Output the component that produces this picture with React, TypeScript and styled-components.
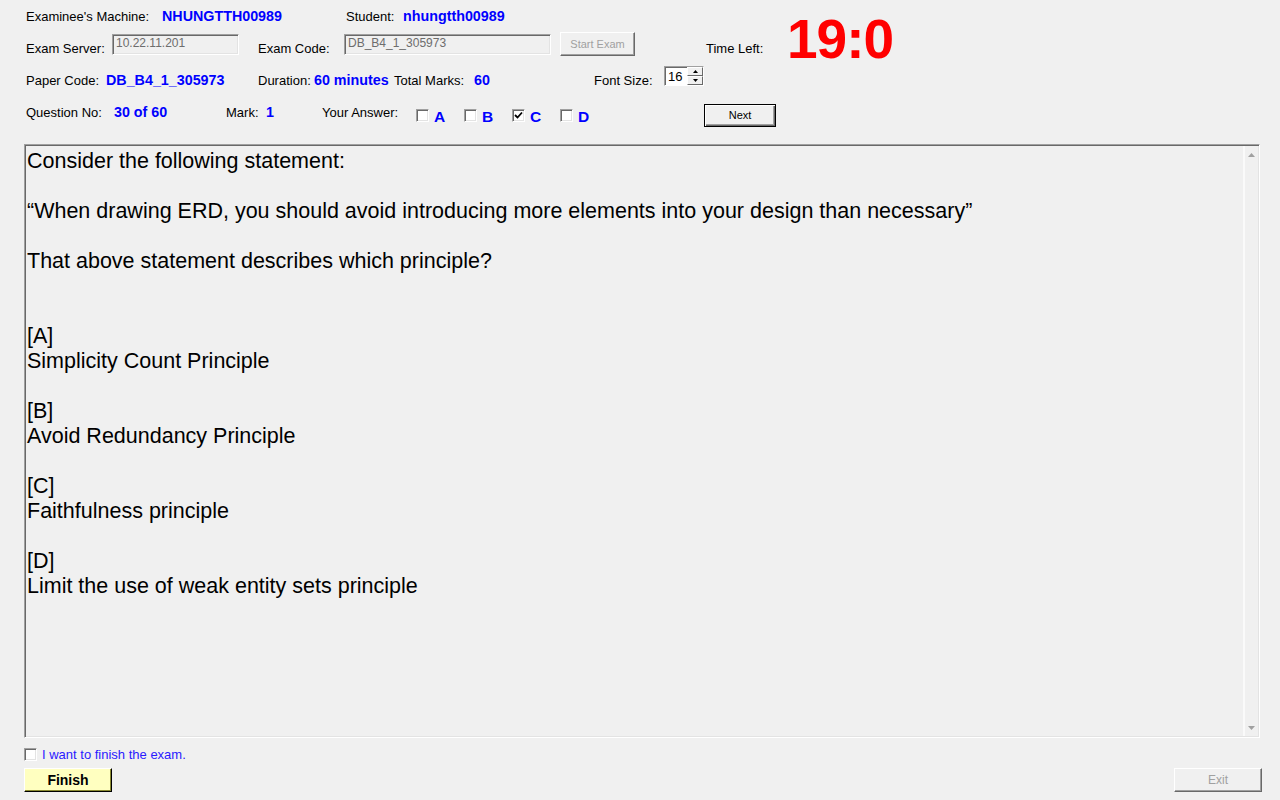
import styled, { createGlobalStyle } from "styled-components";

const GlobalStyle = createGlobalStyle`
  html, body {
    margin: 0;
    padding: 0;
    background: #f0f0f0;
  }
  body {
    font-family: "Liberation Sans", Arial, sans-serif;
    color: #000;
  }
`;

const question = `Consider the following statement:

“When drawing ERD, you should avoid introducing more elements into your design than necessary”

That above statement describes which principle?


[A]
Simplicity Count Principle

[B]
Avoid Redundancy Principle

[C]
Faithfulness principle

[D]
Limit the use of weak entity sets principle`;

const options = [
  { key: "A", checked: false },
  { key: "B", checked: false },
  { key: "C", checked: true },
  { key: "D", checked: false },
];

const UpArrow = () => (
  <svg width="7" height="4" viewBox="0 0 7 4">
    <path d="M3.5 0 L7 4 L0 4 Z" fill="#a0a0a0" />
  </svg>
);

const DownArrow = () => (
  <svg width="7" height="4" viewBox="0 0 7 4">
    <path d="M0 0 L7 0 L3.5 4 Z" fill="#a0a0a0" />
  </svg>
);

const CheckBox = ({ checked }: { checked?: boolean }) => (
  <Box>
    {checked && (
      <svg width="9" height="9" viewBox="0 0 9 9">
        <path d="M1 4 L3.5 6.5 L8 1.5" stroke="#000" strokeWidth="1.8" fill="none" />
      </svg>
    )}
  </Box>
);

const App = () => {
  return (
    <>
      <GlobalStyle />
      <Window>
        <Header>
          <TopSection>
            <LeftBlock>
              <Row $h={32}>
                <Label $w={136}>Examinee's Machine:</Label>
                <Value $w={184}>NHUNGTTH00989</Value>
                <Label $w={57}>Student:</Label>
                <Value>nhungtth00989</Value>
              </Row>
              <Row $h={24}>
                <Label $w={86} $dy={4}>Exam Server:</Label>
                <TextField $w={127}>10.22.11.201</TextField>
                <Spacer $w={19} />
                <Label $w={86} $dy={4}>Exam Code:</Label>
                <TextField $w={207}>DB_B4_1_305973</TextField>
                <Spacer $w={9} />
                <WinButton $w={75} $h={24} disabled>
                  Start Exam
                </WinButton>
              </Row>
            </LeftBlock>
            <TimeBlock>
              <TimeLabel>Time Left:</TimeLabel>
              <Timer>19:0</Timer>
            </TimeBlock>
          </TopSection>
          <Row $h={40}>
            <Label $w={80} $dy={4}>Paper Code:</Label>
            <Value $w={152} $dy={4}>DB_B4_1_305973</Value>
            <Label $w={56} $dy={4}>Duration:</Label>
            <Value $w={80} $dy={4}>60 minutes</Value>
            <Label $w={80} $dy={4}>Total Marks:</Label>
            <Value $w={120} $dy={4}>60</Value>
            <Label $w={70} $dy={4}>Font Size:</Label>
            <Spinner>
              <SpinValue>16</SpinValue>
              <SpinButtons>
                <SpinButton>
                  <svg width="5" height="3" viewBox="0 0 5 3">
                    <path d="M2.5 0 L5 3 L0 3 Z" fill="#000" />
                  </svg>
                </SpinButton>
                <SpinButton>
                  <svg width="5" height="3" viewBox="0 0 5 3">
                    <path d="M0 0 L5 0 L2.5 3 Z" fill="#000" />
                  </svg>
                </SpinButton>
              </SpinButtons>
            </Spinner>
          </Row>
          <Row $h={38}>
            <Label $w={88} $dy={-3}>Question No:</Label>
            <Value $w={112} $dy={-3}>30 of 60</Value>
            <Label $w={40} $dy={-3}>Mark:</Label>
            <Value $w={56} $dy={-3}>1</Value>
            <Label $w={94} $dy={-3}>Your Answer:</Label>
            {options.map((o) => (
              <AnswerOption key={o.key}>
                <CheckBox checked={o.checked} />
                <AnswerLetter>{o.key}</AnswerLetter>
              </AnswerOption>
            ))}
            <Spacer $w={96} />
            <WinButton $w={72} $h={23} $default>
              Next
            </WinButton>
          </Row>
        </Header>

        <QuestionPanel>
          <QuestionText>{question}</QuestionText>
          <ScrollBar>
            <UpArrow />
            <DownArrow />
          </ScrollBar>
        </QuestionPanel>

        <FinishCheck>
          <CheckBox />
          <FinishLabel>I want to finish the exam.</FinishLabel>
        </FinishCheck>

        <ButtonRow>
          <WinButton $w={88} $h={24} $finish>
            Finish
          </WinButton>
          <WinButton $w={88} $h={24} $size={12} disabled>
            Exit
          </WinButton>
        </ButtonRow>
      </Window>
    </>
  );
};

export default App;

const Window = styled.div`
  width: 1280px;
  height: 800px;
  box-sizing: border-box;
  padding-left: 24px;
  display: flex;
  flex-direction: column;
  overflow: hidden;
`;

const Header = styled.div`
  padding-left: 2px;
  display: flex;
  flex-direction: column;
`;

const TopSection = styled.div`
  display: flex;
  height: 56px;
`;

const LeftBlock = styled.div`
  width: 680px;
  display: flex;
  flex-direction: column;
`;

const Row = styled.div<{ $h: number }>`
  display: flex;
  align-items: center;
  height: ${(p) => p.$h}px;
`;

const Spacer = styled.div<{ $w: number }>`
  width: ${(p) => p.$w}px;
  flex-shrink: 0;
`;

const Label = styled.span<{ $w?: number; $dy?: number }>`
  ${(p) => (p.$w ? `width: ${p.$w}px;` : "")}
  flex-shrink: 0;
  font-size: 13px;
  line-height: 15px;
  white-space: nowrap;
  ${(p) =>
    p.$dy
      ? p.$dy > 0
        ? `padding-top: ${p.$dy * 2}px;`
        : `padding-bottom: ${-p.$dy * 2}px;`
      : ""}
`;

const Value = styled(Label)`
  font-size: 14.3px;
  font-weight: bold;
  color: #0000ff;
`;

const TextField = styled.div<{ $w: number }>`
  width: ${(p) => p.$w}px;
  height: 21px;
  box-sizing: border-box;
  flex-shrink: 0;
  border: 1px solid;
  border-color: #a0a0a0 #fff #fff #a0a0a0;
  box-shadow: inset 1px 1px #696969, inset -1px -1px #e3e3e3;
  background: #f0f0f0;
  color: #6d6d6d;
  font-size: 12px;
  line-height: 17px;
  padding-left: 3px;
`;

const WinButton = styled.button<{
  $w: number;
  $h: number;
  $default?: boolean;
  $finish?: boolean;
  $size?: number;
}>`
  width: ${(p) => p.$w}px;
  height: ${(p) => p.$h}px;
  flex-shrink: 0;
  box-sizing: border-box;
  padding: 0;
  margin: 0;
  font-family: "Liberation Sans", Arial, sans-serif;
  font-size: ${(p) => (p.$finish ? 14 : p.$size ?? 11)}px;
  font-weight: ${(p) => (p.$finish ? "bold" : "normal")};
  color: #000;
  background: ${(p) => (p.$finish ? "#ffffc0" : "#f0f0f0")};
  border: 1px solid;
  border-color: ${(p) =>
    p.$default ? "#000" : p.$finish ? "#fff #000 #000 #fff" : "#fff #696969 #696969 #fff"};
  box-shadow: ${(p) =>
    p.$default
      ? "inset 1px 1px #fff, inset -1px -1px #696969, inset -2px -2px #a0a0a0"
      : p.$finish
      ? "inset -1px -1px #8a8a30"
      : "inset -1px -1px #a0a0a0"};

  &:disabled {
    color: #a0a0a0;
  }
`;

const TimeBlock = styled.div`
  display: flex;
  align-items: flex-start;
`;

const TimeLabel = styled.span`
  width: 81px;
  font-size: 13px;
  line-height: 15px;
  padding-top: 41px;
  white-space: nowrap;
`;

const Timer = styled.span`
  font-size: 55px;
  line-height: 55px;
  margin-top: 12px;
  letter-spacing: -1px;
  font-weight: bold;
  color: #ff0000;
  white-space: nowrap;
`;

const Spinner = styled.div`
  width: 40px;
  height: 20px;
  box-sizing: border-box;
  display: flex;
  border: 1px solid;
  border-color: #a0a0a0 #fff #fff #a0a0a0;
  box-shadow: inset 1px 1px #696969;
  background: #fff;
`;

const SpinValue = styled.span`
  flex: 1;
  font-size: 13px;
  line-height: 17px;
  padding: 1px 0 0 3px;
`;

const SpinButtons = styled.div`
  width: 16px;
  display: flex;
  flex-direction: column;
`;

const SpinButton = styled.div`
  flex: 1;
  display: flex;
  align-items: center;
  justify-content: center;
  background: #f0f0f0;
  box-sizing: border-box;
  border: 1px solid;
  border-color: #fff #696969 #696969 #fff;
`;

const AnswerOption = styled.div`
  width: 48px;
  flex-shrink: 0;
  display: flex;
  align-items: center;
  gap: 5px;
`;

const Box = styled.div`
  width: 13px;
  height: 13px;
  box-sizing: border-box;
  flex-shrink: 0;
  display: flex;
  align-items: center;
  justify-content: center;
  background: #fff;
  border: 1px solid;
  border-color: #a0a0a0 #fff #fff #a0a0a0;
  box-shadow: inset 1px 1px #696969, inset -1px -1px #e3e3e3;
`;

const AnswerLetter = styled.span`
  font-size: 15.5px;
  font-weight: bold;
  color: #0000ff;
  line-height: 17px;
  padding-top: 3px;
`;

const QuestionPanel = styled.div`
  margin-top: 10px;
  width: 1236px;
  height: 594px;
  box-sizing: border-box;
  display: flex;
  border: 1px solid;
  border-color: #a0a0a0 #fff #fff #a0a0a0;
  box-shadow: inset 1px 1px #696969, inset -1px -1px #e3e3e3;
  background: #f0f0f0;
`;

const QuestionText = styled.div`
  flex: 1;
  padding: 4px 0 0 2px;
  font-size: 21.5px;
  line-height: 25px;
  white-space: pre-wrap;
  color: #000;
`;

const ScrollBar = styled.div`
  width: 15px;
  margin: 1px 1px 1px 0;
  box-sizing: border-box;
  border-left: 2px solid #fafafa;
  display: flex;
  flex-direction: column;
  align-items: center;
  justify-content: space-between;
  padding: 7px 0 6px;
`;

const FinishCheck = styled.div`
  margin-top: 10px;
  height: 13px;
  display: flex;
  align-items: center;
  gap: 5px;
`;

const FinishLabel = styled.span`
  font-size: 13px;
  line-height: 15px;
  color: #2a1aff;
`;

const ButtonRow = styled.div`
  margin-top: 7px;
  margin-right: 18px;
  display: flex;
  justify-content: space-between;
`;
